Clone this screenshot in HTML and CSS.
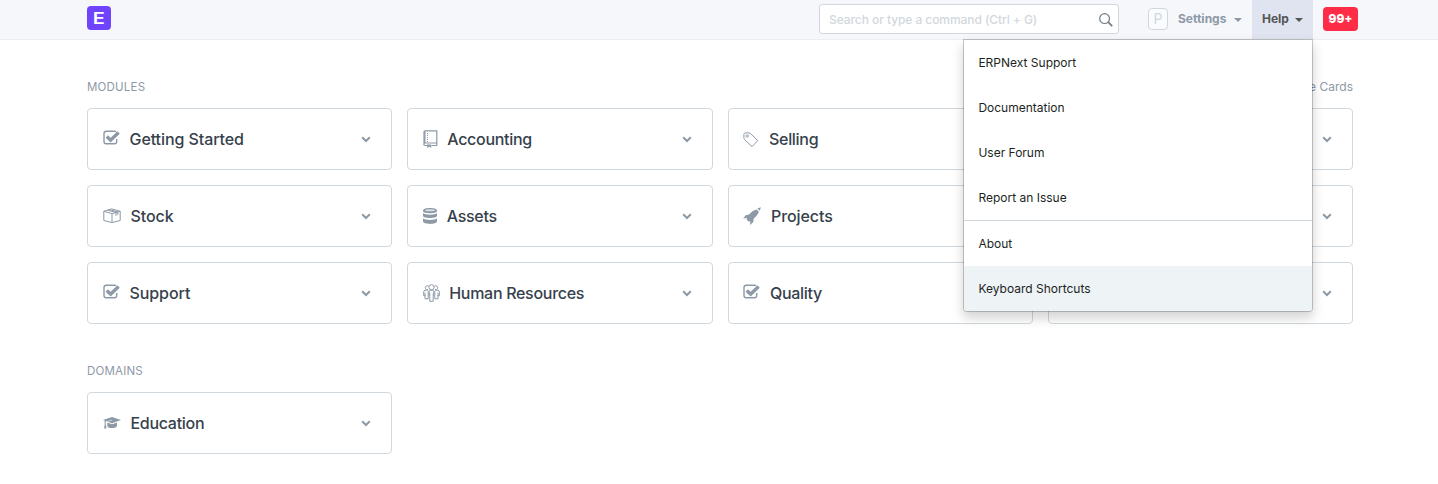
FILE: index.html
```html
<!DOCTYPE html>
<html lang="en">
<head>
<meta charset="utf-8">
<title>ERPNext</title>
<link rel="stylesheet" href="styles.css">
</head>
<body>
<svg width="0" height="0" class="sprite">
  <symbol id="check" viewBox="0 0 17 16"><path d="M13 1.800C12.700 1.400 12.200 1.300 11.600 1.300H3.200Q1 1.300 1 3.500V11.400Q1 13.700 3.200 13.700H11.500Q13.700 13.700 13.700 11.400V9" fill="none" stroke="currentColor" stroke-width="1.400"/><path d="M3.800 6.600 7.600 10.200 15.600 2.500" fill="none" stroke="currentColor" stroke-width="3.400"/></symbol>
  <symbol id="box" viewBox="0 0 18 16"><g fill="none" stroke="currentColor" stroke-linejoin="round"><path d="M.8 3.300 9 5.600V14.600L.8 12.500ZM9 5.600 17.200 3.300V12.500L9 14.600M.8 3.300 8.600.9 17.200 3.300M4.700 2.200 13 4.500V7.800M6.600 1.600 14.800 4V7"/></g></symbol>
  <symbol id="book" viewBox="0 0 15 18"><g fill="none" stroke="currentColor"><path d="M1 15V2Q1 .8 2.200.8H13.800V15.500H8.500M4 15.500H2Q.8 15.500.8 14.300T2 13H13.800" stroke-width="1.200"/><path d="M1.800 1V13" stroke-width="1.400"/><path d="M4.500 3V12" stroke-dasharray="1 1"/></g><path d="M4 14.600H8.200V18L6.100 16.600 4 18Z" fill="currentColor"/></symbol>
  <symbol id="tag" viewBox="0 0 16 16"><path d="M.9 2.500Q.9.900 2.500.9H6Q7 .9 7.700 1.600L14.700 8.600 9 14.700 1.700 7.600Q.9 6.800.9 5.700Z" fill="none" stroke="currentColor" stroke-linejoin="round"/><circle cx="4.200" cy="4" r="1.200" fill="none" stroke="currentColor" stroke-width=".9"/></symbol>
  <symbol id="database" viewBox="0 0 14 16"><g fill="currentColor"><path d="M0 2.500C0-.8 14-.8 14 2.500V3.300C13.500 5.900.5 5.900 0 3.300ZM0 5.100C1.500 7.300 12.500 7.300 14 5.100V8C13.500 10.600.5 10.600 0 8ZM0 10.300C1.500 12.500 12.500 12.500 14 10.300V13.500C13.500 16.700.5 16.700 0 13.500Z"/></g><ellipse cx="7" cy="2.300" rx="4.900" ry="1" fill="#fff" opacity=".7"/></symbol>
  <symbol id="rocket" viewBox="0 0 18 18"><g fill="currentColor"><path d="M14.300 1.500 17.800.2 16.900 3.700Z"/><path d="M13.400 2.400C9.500 3.800 7.700 5.600 6.100 7.600L2.700 8.200.2 11.500 4.100 11 3.600 12.600 5.700 14.800 7.300 14.100 7 18 10.300 14.900 10.700 11.800C12.700 10 14.500 8 16 4.800Z"/></g></symbol>
  <symbol id="people" viewBox="0 0 17 18"><g fill="none" stroke="currentColor"><circle cx="8.500" cy="3.300" r="2.600"/><path d="M5.700 2.300A2 2 0 1 0 5 5.600M11.300 2.300A2 2 0 1 1 12 5.600M6.200 11.500V7.600Q6.200 6.200 7.500 6.200H9.500Q10.800 6.200 10.800 7.600V11.500M6.800 9.500V17.300H10.200V9.500M4.800 6.200H2Q.7 6.500.7 8V11.800H2V8.700M2 11V14.800H5.200V7M12.200 6.200H15Q16.300 6.500 16.300 8V11.800H15V8.700M15 11V14.800H11.800V7"/></g></symbol>
  <symbol id="cap" viewBox="0 0 18 13"><g fill="currentColor"><path d="M9 0 18 3.100 9 6.200 0 3.100Z"/><path d="M4.300 5.600 9 7.200 14 5.600V9Q13 11 9 11T4.300 9Z"/><path d="M1.600 3.500H2.900V7.500L3.500 11.500H1.100L1.700 7.500Z"/></g><path d="M9 3 3 5V8" fill="none" stroke="#fff" stroke-width=".5"/></symbol>
  <symbol id="chevron" viewBox="0 0 10 7"><path d="M1.200 1.300 5 5 8.800 1.300" fill="none" stroke="currentColor" stroke-width="2"/></symbol>
</svg>

<header class="navbar">
  <div class="container nav-inner">
    <a class="brand"><span>E</span></a>
    <div class="search"><span>Search or type a command (Ctrl + G)</span>
      <svg width="14" height="14" viewBox="0 0 14 14"><circle cx="5.600" cy="5.600" r="4.900" fill="none" stroke="currentColor" stroke-width="1.200"/><path d="M9.200 9.200 13.200 13.200" stroke="currentColor" stroke-width="1.800"/></svg>
    </div>
    <div class="avatar">P</div>
    <div class="nav-item settings">Settings<i class="caret"></i></div>
    <div class="nav-item help">Help<i class="caret"></i>
      <div class="menu">
        <a>ERPNext Support</a>
        <a>Documentation</a>
        <a>User Forum</a>
        <a>Report an Issue</a>
        <hr>
        <a>About</a>
        <a class="active">Keyboard Shortcuts</a>
      </div>
    </div>
    <div class="badge">99+</div>
  </div>
</header>

<main class="container">
  <section>
    <div class="section-head"><h2>MODULES</h2><a class="toggle">Show / Hide Cards</a></div>
    <div class="grid">
      <div class="card"><svg class="icon check"><use href="#check"/></svg><span>Getting Started</span><svg class="chev"><use href="#chevron"/></svg></div>
      <div class="card"><svg class="icon book"><use href="#book"/></svg><span class="tight">Accounting</span><svg class="chev"><use href="#chevron"/></svg></div>
      <div class="card"><svg class="icon tag"><use href="#tag"/></svg><span class="tight">Selling</span><svg class="chev"><use href="#chevron"/></svg></div>
      <div class="card"><svg class="chev"><use href="#chevron"/></svg></div>
      <div class="card"><svg class="icon box"><use href="#box"/></svg><span>Stock</span><svg class="chev"><use href="#chevron"/></svg></div>
      <div class="card"><svg class="icon database"><use href="#database"/></svg><span class="tight">Assets</span><svg class="chev"><use href="#chevron"/></svg></div>
      <div class="card"><svg class="icon rocket"><use href="#rocket"/></svg><span>Projects</span><svg class="chev"><use href="#chevron"/></svg></div>
      <div class="card"><svg class="chev"><use href="#chevron"/></svg></div>
      <div class="card"><svg class="icon check"><use href="#check"/></svg><span>Support</span><svg class="chev"><use href="#chevron"/></svg></div>
      <div class="card"><svg class="icon people"><use href="#people"/></svg><span class="tight">Human Resources</span><svg class="chev"><use href="#chevron"/></svg></div>
      <div class="card"><svg class="icon check"><use href="#check"/></svg><span class="tight">Quality</span><svg class="chev"><use href="#chevron"/></svg></div>
      <div class="card"><svg class="chev"><use href="#chevron"/></svg></div>
    </div>
  </section>
  <section class="domains">
    <div class="section-head"><h2>DOMAINS</h2></div>
    <div class="grid">
      <div class="card"><svg class="icon cap"><use href="#cap"/></svg><span class="tight">Education</span><svg class="chev"><use href="#chevron"/></svg></div>
    </div>
  </section>
</main>
</body>
</html>
```
FILE: styles.css
```css
* { box-sizing: border-box; }
body { margin: 0; background: #fff; color: #36414c; font: 12px/18px Inter, "Liberation Sans", sans-serif; overflow: hidden; }
.sprite { position: absolute; }
.container { width: 1266px; margin-left: 87px; }
.navbar { height: 40px; background: #f5f7fb; border-bottom: 1px solid #ebeef2; }
.nav-inner { display: flex; align-items: flex-start; height: 39px; }
.brand { width: 24px; height: 24px; margin-top: 6px; border-radius: 4px; background: #7043ff; color: #fff; display: flex; align-items: center; justify-content: center; font-size: 16px; font-weight: 600; line-height: 24px; }
.brand span { transform: scaleX(1.250); }
.search { width: 300px; height: 30px; margin: 4px 0 0 auto; padding: 0 6px 0 9px; border: 1px solid #d1d8dd; border-radius: 3px; background: #fff; color: #d1d8dd; display: flex; align-items: center; justify-content: space-between; font-weight: 500; }
.search span { letter-spacing: -.07px; margin-top: 2px; }
.search svg { color: #717b86; margin: 2px -1px 0 0; }
.avatar { width: 20px; height: 22px; margin: 8px 0 0 29px; border: 1px solid #d1d8dd; border-radius: 4px; background: #fafbfc; color: #d1d8dd; font-size: 14px; line-height: 20px; text-align: center; }
.nav-item { height: 39px; padding: 0 10px 2px; display: flex; align-items: center; font-weight: 700; color: #8d99a6; line-height: 37px; }
.settings { width: 84px; }
.help { position: relative; width: 61px; background: #dfe4f0; color: #555; }
.caret { margin-left: auto; margin-top: 2px; border: 4px solid transparent; border-top-color: currentColor; border-bottom: 0; }
.settings .caret { margin-right: 0; }
.badge { height: 24px; width: 35px; margin: 7px -5px 0 10px; border-radius: 4px; background: #ff2c48; color: #fff; font-weight: 800; line-height: 24px; text-align: center; }
.menu { position: absolute; top: 39px; right: 0; z-index: 5; width: 350px; border: 1px solid rgba(0,0,0,.2); background: #fff; background-clip: padding-box; border-radius: 0 0 4px 4px; box-shadow: 0 6px 12px rgba(0,0,0,.175); color: #1c1f23; font-weight: 400; line-height: 18px; }
.menu a { display: flex; align-items: center; height: 45px; padding: 0 14.400px; }
.menu hr { margin: 0; border: 0; height: 1px; background: #d1d8dd; }
.menu .active { background: #eef3f6; border-radius: 0 0 3px 3px; }
.section-head { display: flex; justify-content: space-between; align-items: center; height: 18px; margin: 38px 0 12px; color: #8d99a6; }
.section-head h2 { margin: 0; font-size: 11.500px; font-weight: 400; letter-spacing: .2px; }
.grid { display: grid; grid-template-columns: repeat(4, 1fr); gap: 15px; }
.card { height: 62px; border: 1px solid #d1d8dd; border-radius: 4px; padding: 0 20px 0 14.500px; display: flex; align-items: center; gap: 10px; font-size: 16px; font-weight: 500; letter-spacing: -.08px; }
.tight { letter-spacing: -.3px; }
.icon { color: #8d99a6; flex: none; }
.check { width: 17px; height: 16px; margin-top: -2px; }
.box { width: 18px; height: 16px; }
.book { width: 15px; height: 18px; margin-right: -.5px; }
.tag { width: 16px; height: 16px; margin-top: 2px; }
.database { width: 14px; height: 16px; }
.rocket { width: 18px; height: 18px; }
.people { width: 17px; height: 18px; margin-right: -.5px; }
.cap { width: 18px; height: 13px; }
.chev { width: 10px; height: 7px; margin-left: auto; color: #8d99a6; }
```
